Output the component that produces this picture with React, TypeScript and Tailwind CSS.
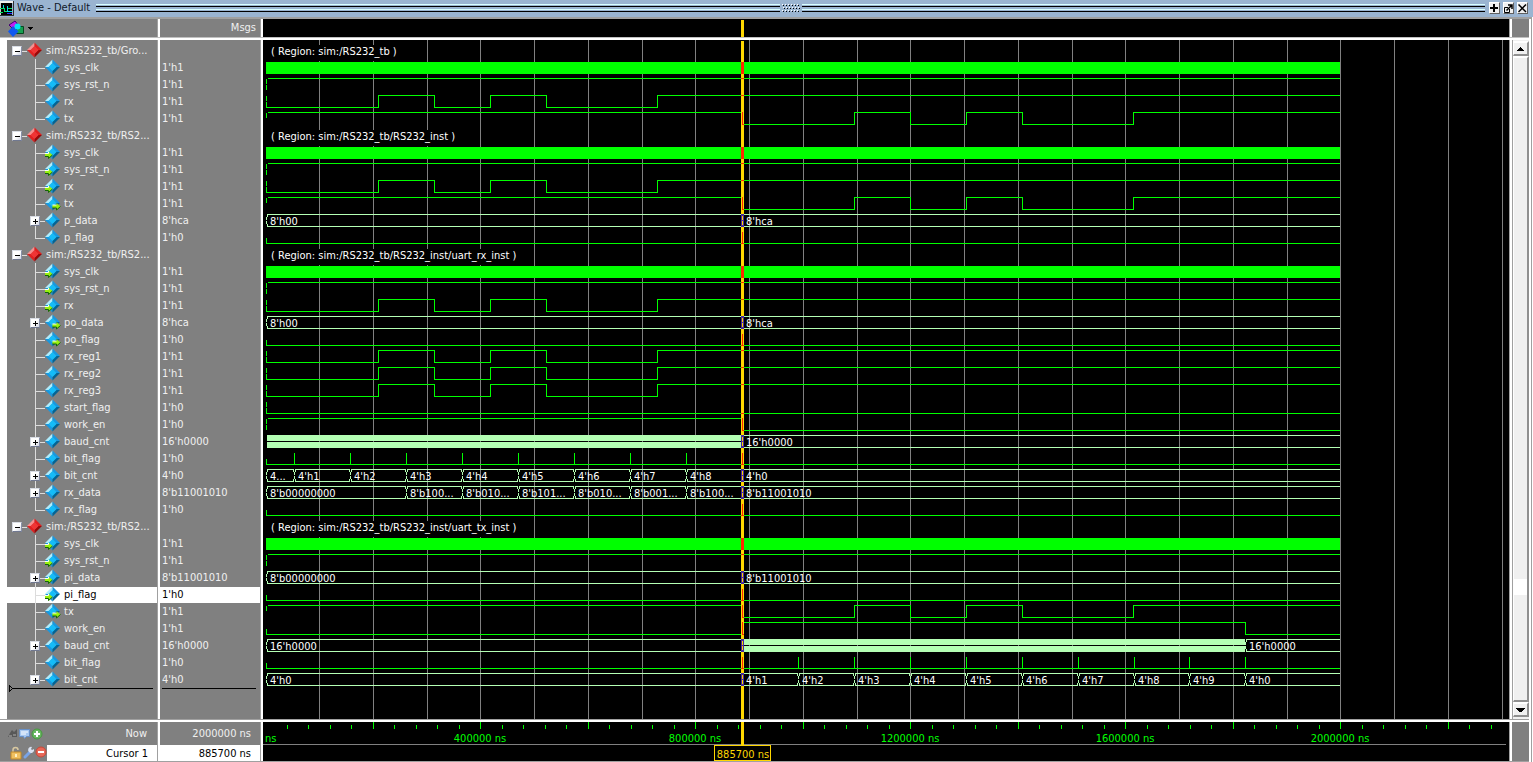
import { useState } from "react";

type Level = { kind: "level"; start: 0 | 1; edges: number[]; init: "both" | "upper" | "lower" };
type Pulse = { kind: "pulse"; at: number[] };
type Clock = { kind: "clock" };
type Bus = { kind: "bus"; segs: { from: number; label: string; dense?: boolean }[] };
type Region = { kind: "region"; label: string; width: number };
type Wave = Level | Pulse | Clock | Bus | Region;

interface Row {
    name: string;
    value: string;
    wave: Wave;
    port?: "in" | "out";
    expandable?: boolean;
}

// Time base: everything below is in microseconds
const END = 2000;
const CURSOR = 886;
const BIT = 104.17;
const ORIGIN = 2.5;
const SCALE = 0.5374;
const ROW_H = 17;
const xAt = (t: number) => Math.round(ORIGIN + t * SCALE);

const rxEdges = [209, 313, 417, 522, 729];
const txEdges = [CURSOR, 1095, 1199, 1303, 1407, 1615];
const rxBits = Array.from({ length: 8 }, (_, i) => 53.5 + i * BIT);
const txBits = Array.from({ length: 9 }, (_, i) => CURSOR + (i + 1) * BIT);

const level = (start: 0 | 1, edges: number[], init: Level["init"]): Level => ({ kind: "level", start, edges, init });
const region = (path: string, width: number): Region => ({ kind: "region", label: `( Region: ${path} )`, width });
const clock: Clock = { kind: "clock" };
const reset = level(1, [], "both");
const rx = level(0, rxEdges, "both");
const tx = level(1, txEdges, "upper");

const rows: Row[] = [
    { name: "sim:/RS232_tb/Gro...", value: "", wave: region("sim:/RS232_tb", 130) },
    { name: "sys_clk", value: "1'h1", wave: clock },
    { name: "sys_rst_n", value: "1'h1", wave: reset },
    { name: "rx", value: "1'h1", wave: rx },
    { name: "tx", value: "1'h1", wave: tx },
    { name: "sim:/RS232_tb/RS2...", value: "", wave: region("sim:/RS232_tb/RS232_inst", 190) },
    { name: "sys_clk", value: "1'h1", wave: clock, port: "in" },
    { name: "sys_rst_n", value: "1'h1", wave: reset, port: "in" },
    { name: "rx", value: "1'h1", wave: rx, port: "in" },
    { name: "tx", value: "1'h1", wave: tx, port: "out" },
    { name: "p_data", value: "8'hca", wave: { kind: "bus", segs: [{ from: 0, label: "8'h00" }, { from: CURSOR, label: "8'hca" }] }, expandable: true },
    { name: "p_flag", value: "1'h0", wave: { kind: "pulse", at: [CURSOR] } },
    { name: "sim:/RS232_tb/RS2...", value: "", wave: region("sim:/RS232_tb/RS232_inst/uart_rx_inst", 252) },
    { name: "sys_clk", value: "1'h1", wave: clock, port: "in" },
    { name: "sys_rst_n", value: "1'h1", wave: reset, port: "in" },
    { name: "rx", value: "1'h1", wave: rx, port: "in" },
    { name: "po_data", value: "8'hca", wave: { kind: "bus", segs: [{ from: 0, label: "8'h00" }, { from: CURSOR, label: "8'hca" }] }, port: "out", expandable: true },
    { name: "po_flag", value: "1'h0", wave: { kind: "pulse", at: [CURSOR] }, port: "out" },
    { name: "rx_reg1", value: "1'h1", wave: rx },
    { name: "rx_reg2", value: "1'h1", wave: rx },
    { name: "rx_reg3", value: "1'h1", wave: rx },
    { name: "start_flag", value: "1'h0", wave: level(0, [], "both") },
    { name: "work_en", value: "1'h0", wave: level(1, [CURSOR], "both") },
    { name: "baud_cnt", value: "16'h0000", wave: { kind: "bus", segs: [{ from: 0, label: "", dense: true }, { from: CURSOR, label: "16'h0000" }] }, expandable: true },
    { name: "bit_flag", value: "1'h0", wave: { kind: "pulse", at: [...rxBits, CURSOR] } },
    {
        name: "bit_cnt",
        value: "4'h0",
        wave: { kind: "bus", segs: [{ from: 0, label: "4..." }, ...rxBits.map((t, i) => ({ from: t, label: `4'h${i + 1}` })), { from: CURSOR, label: "4'h0" }] },
        expandable: true,
    },
    {
        name: "rx_data",
        value: "8'b11001010",
        wave: {
            kind: "bus",
            segs: [
                { from: 0, label: "8'b00000000" },
                ...["8'b100...", "8'b010...", "8'b101...", "8'b010...", "8'b001...", "8'b100..."].map((label, i) => ({ from: rxBits[i + 2], label })),
                { from: CURSOR, label: "8'b11001010" },
            ],
        },
        expandable: true,
    },
    { name: "rx_flag", value: "1'h0", wave: { kind: "pulse", at: [CURSOR] } },
    { name: "sim:/RS232_tb/RS2...", value: "", wave: region("sim:/RS232_tb/RS232_inst/uart_tx_inst", 252) },
    { name: "sys_clk", value: "1'h1", wave: clock, port: "in" },
    { name: "sys_rst_n", value: "1'h1", wave: reset, port: "in" },
    { name: "pi_data", value: "8'b11001010", wave: { kind: "bus", segs: [{ from: 0, label: "8'b00000000" }, { from: CURSOR, label: "8'b11001010" }] }, port: "in", expandable: true },
    { name: "pi_flag", value: "1'h0", wave: { kind: "pulse", at: [CURSOR] }, port: "in" },
    { name: "tx", value: "1'h1", wave: tx, port: "out" },
    { name: "work_en", value: "1'h1", wave: level(0, [CURSOR, txBits[8]], "lower") },
    {
        name: "baud_cnt",
        value: "16'h0000",
        wave: { kind: "bus", segs: [{ from: 0, label: "16'h0000" }, { from: CURSOR, label: "", dense: true }, { from: txBits[8], label: "16'h0000" }] },
        expandable: true,
    },
    { name: "bit_flag", value: "1'h0", wave: { kind: "pulse", at: [CURSOR, ...txBits] } },
    {
        name: "bit_cnt",
        value: "4'h0",
        wave: {
            kind: "bus",
            segs: [{ from: 0, label: "4'h0" }, { from: CURSOR, label: "4'h1" }, ...txBits.map((t, i) => ({ from: t, label: i < 8 ? `4'h${i + 2}` : "4'h0" }))],
        },
        expandable: true,
    },
];

function Diamond({ red, port }: { red?: boolean; port?: "in" | "out" }) {
    const c = red ? ["#f49090", "#e02020", "#980808", "#f03434"] : ["#b0ecfc", "#1898e0", "#046494", "#14bcf8"];
    return (
        <svg width="16" height="17" className="block shrink-0">
            <path d="M7.5 0.5 L0 8 H4 L7.5 4.5Z" fill={c[0]} />
            <path d="M7.5 0.5 L15 8 H11 L7.5 4.5Z" fill={c[1]} />
            <path d="M0 8 L7.5 15.5 V11.5 L4 8Z" fill={c[1]} />
            <path d="M15 8 L7.5 15.5 V11.5 L11 8Z" fill={c[2]} />
            <path d="M7.5 4 L11.5 8 L7.5 12 L3.5 8Z" fill={c[3]} />
            {port === "in" && (
                <g>
                    <path d="M0 9.5 H3.5 V7.5 L7.5 11 L3.5 15 V13 H0Z" fill="#98f010" />
                    <path d="M0 12.5 H3.5 V14.5 L7.5 11" stroke="#146408" fill="none" />
                    <path d="M0 9.5 H3.5 V8" stroke="#fffff0" fill="none" />
                </g>
            )}
            {port === "out" && (
                <g>
                    <path d="M7.5 10 H11.5 V8 L15.5 11.5 L11.5 15 V13 H7.5Z" fill="#98f010" />
                    <path d="M7.5 13 H11.5 V15 L15.5 11.5" stroke="#146408" fill="none" />
                    <path d="M7.5 10 H11.5" stroke="#fffff0" fill="none" />
                </g>
            )}
        </svg>
    );
}

function Expander({ open, label }: { open?: boolean; label: string }) {
    return (
        <button
            aria-label={label}
            className="block size-[10px] shrink-0 border border-t-[#d8dce4] border-r-[#8890a8] border-b-[#707890] border-l-[#d8dce4] bg-linear-to-br from-white from-50% to-[#d0d4e0]"
        >
            <svg width="8" height="8" className="block" shapeRendering="crispEdges">
                <path d={open ? "M2 4h5v1h-5z" : "M2 4h5v1h-5z M4 2h1v2h-1z M4 5h1v2h-1z"} fill="#000" />
            </svg>
        </button>
    );
}

function TreeRow({ row, last, selected, onSelect }: { row: Row; last: boolean; selected: boolean; onSelect: () => void }) {
    const tone = selected ? "bg-white text-black shadow-[inset_0_1px_#808080]" : "text-[#f0f0f0]";
    if (row.wave.kind === "region") {
        return (
            <div className="flex h-[17px] items-center pl-[5px] text-[#f0f0f0]">
                <Expander open label={`Collapse ${row.name}`} />
                <svg width="5" height="17" className="block shrink-0" shapeRendering="crispEdges">
                    <path d="M0 9h5v1h-5z" fill="#dcdcdc" />
                </svg>
                <div className="w-[19px] shrink-0">
                    <Diamond red />
                </div>
                <span className="whitespace-nowrap">{row.name}</span>
            </div>
        );
    }
    return (
        <div onClick={onSelect} className={`flex h-[17px] items-center pl-[23px] ${tone}`}>
            <div className="relative flex w-[15px] shrink-0 items-center">
                <svg width="15" height="17" className="block" shapeRendering="crispEdges">
                    <path d={last ? "M5 0h1v9h-1z M5 9h10v1h-10z" : "M5 0h1v17h-1z M5 9h10v1h-10z"} fill="#dcdcdc" />
                </svg>
                {row.expandable && (
                    <div className="absolute top-1 left-0">
                        <Expander label={`Expand ${row.name}`} />
                    </div>
                )}
            </div>
            <div className="w-[19px] shrink-0">
                <Diamond port={row.port} />
            </div>
            <span className="whitespace-nowrap">{row.name}</span>
        </div>
    );
}

function LevelTrace({ w }: { w: Level }) {
    let lv = w.start;
    let d = `M${xAt(0) + 1}.5 ${lv ? 2.5 : 14.5}`;
    w.edges.forEach((t) => {
        lv = lv ? 0 : 1;
        d += ` H${xAt(t)}.5 V${lv ? 2.5 : 14.5}`;
    });
    d += ` H${xAt(END)}`;
    const x = xAt(0);
    return (
        <g stroke="#00ff00" fill="none">
            <path d={d} />
            {w.init !== "lower" && <path d={`M${x}.5 3V8`} />}
            {w.init !== "upper" && <path d={`M${x}.5 9V14`} />}
            {w.start === 0 && <path d={`M${x} 14.5h2`} />}
        </g>
    );
}

function BusTrace({ w }: { w: Bus }) {
    return (
        <g>
            {w.segs.map((s, i) => {
                const a = xAt(s.from);
                const b = xAt(w.segs[i + 1]?.from ?? END);
                const final = i === w.segs.length - 1;
                if (s.dense) {
                    return <path key={i} d={`M${a + 1} 2H${b}V8H${a + 1}Z M${a + 1} 9H${b}V15H${a + 1}Z`} fill="#b4ffb4" />;
                }
                return (
                    <g key={i}>
                        <path
                            d={`M${a + 1} 2.5H${final ? b : b - 1} M${a + 1} 14.5H${final ? b : b - 1} M${a + 1}.5 3V5 M${a}.5 5V8 M${a}.5 9V12 M${a + 1}.5 12V14`}
                            stroke="#b4ffb4"
                            fill="none"
                        />
                        {!final && <path d={`M${b - 1}.5 2V5 M${b - 1}.5 12V15`} stroke="#b4ffb4" />}
                        <text x={a + 4} y="13" fill="#fff">
                            {s.label}
                        </text>
                    </g>
                );
            })}
        </g>
    );
}

function Trace({ w }: { w: Wave }) {
    const x0 = xAt(0);
    const x1 = xAt(END);
    switch (w.kind) {
        case "clock":
            return <rect x={x0} y="3" width={x1 - x0} height="12" fill="#00ff00" />;
        case "level":
            return <LevelTrace w={w} />;
        case "pulse":
            return <path d={`M${x0} 14.5H${x1} M${x0}.5 9V14 ${w.at.map((t) => `M${xAt(t)}.5 3V14`).join(" ")}`} stroke="#00ff00" fill="none" />;
        case "bus":
            return <BusTrace w={w} />;
        case "region":
            return (
                <g>
                    <rect x="5" y="3" width={w.width} height="16" fill="#000" />
                    <text x="8" y="13" fill="#fff">
                        {w.label}
                    </text>
                </g>
            );
    }
}

// Inverted colours where a trace passes under the cursor
function CursorOverlap({ w, x }: { w: Wave; x: number }) {
    if (w.kind === "region") return null;
    if (w.kind === "clock") return <rect x={x - 1} y="3" width="3" height="12" fill="#ff2800" />;
    if (w.kind === "bus") return <path d={`M${x - 1} 2h3v13h-3z M${x} 4v4h1v-4z M${x} 9v4h1v-4z`} fill="#4828a0" fillRule="evenodd" />;
    if (w.kind === "pulse") return <path d={`M${x} 3h1v11h1v1h-3v-1h1z`} fill="#ff2800" />;
    if (w.edges.includes(CURSOR)) return <path d={`M${x} 2h1v12h1v1h-2z`} fill="#ff2800" />;
    const up = w.edges.filter((t) => t < CURSOR).length % 2 ? !w.start : w.start;
    return <rect x={x - 1} y={up ? 2 : 14} width="3" height="1" fill="#ff2800" />;
}

function WavePlot() {
    const cx = xAt(CURSOR);
    return (
        <svg className="block min-w-0 flex-1 text-[11px]" shapeRendering="crispEdges" role="img" aria-label="Waveforms">
            {Array.from({ length: 40 }, (_, i) => (
                <rect key={i} x={xAt((i + 1) * 100)} y="0" width="1" height="100%" fill="#808080" />
            ))}
            {rows.map((r, i) => (
                <g key={i} transform={`translate(0 ${2 + i * ROW_H})`}>
                    <Trace w={r.wave} />
                </g>
            ))}
            <rect x={cx - 1} y="1" width="3" height="100%" fill="#ffd700" />
            {rows.map((r, i) => (
                <g key={i} transform={`translate(0 ${2 + i * ROW_H})`}>
                    <CursorOverlap w={r.wave} x={cx} />
                </g>
            ))}
        </svg>
    );
}

function Ruler() {
    const cx = xAt(CURSOR);
    return (
        <svg className="block min-w-0 flex-1 text-[11px]" shapeRendering="crispEdges" role="img" aria-label="Timeline">
            {Array.from({ length: 57 }, (_, i) => {
                const major = (i + 1) % 5 === 0;
                return <rect key={i} x={xAt((i + 1) * 40)} y={major ? 0 : 3} width="1" height={major ? 7 : 4} fill="#00ff00" />;
            })}
            <text x="2" y="20" fill="#00ff00">
                ns
            </text>
            {[400, 800, 1200, 1600, 2000].map((t) => (
                <text key={t} x={xAt(t)} y="20" textAnchor="middle" fill="#00ff00">
                    {`${t}000 ns`}
                </text>
            ))}
            <path d="M0 22.5H1243" stroke="#808080" />
            <rect x={cx - 1} y="0" width="3" height="23" fill="#ffd700" />
            <rect x={cx - 27.5} y="23.5" width="56" height="15" fill="#000" stroke="#ffd700" />
            <text x={cx + 1} y="36" textAnchor="middle" fill="#ffd700">
                885700 ns
            </text>
        </svg>
    );
}

function Grooves() {
    return (
        <div className="flex flex-1 flex-col gap-[2px]">
            <div className="h-[3px] border-t border-b border-t-[#d8ffff] border-b-black" />
            <div className="h-[3px] border-t border-b border-t-[#d8ffff] border-b-black" />
        </div>
    );
}

function TitleBar() {
    const btn = "flex h-[12px] w-[11px] items-center justify-center border border-t-white border-l-white border-r-[#606060] border-b-[#606060] bg-[#f0f0f0]";
    return (
        <header className="flex h-[17px] items-center bg-[#9ab4d1] pr-[5px] pb-px">
            <svg width="14" height="15" className="mr-[3px] block" shapeRendering="crispEdges">
                <path d="M0 0h13v2h-13z" fill="#f0f0f0" />
                <path d="M0 2h12v12h-12z" fill="#000" />
                <path d="M0 2h1v12h-1z" fill="#d0d0d0" />
                <path d="M13 0h1v15h-14v-1h13z" fill="#303030" />
                <path d="M0 7.5h4v3h3v-3h5 M0 11.5h3" stroke="#00e060" fill="none" />
                <path d="M3.5 4v3 M7.5 5v6 M8 10.5h4" stroke="#00d8f0" fill="none" />
                <path d="M7 12.5h5" stroke="#3030ff" />
            </svg>
            <h1 className="mr-[6px] text-[11px] leading-[16px] whitespace-nowrap text-[#101828]">Wave - Default</h1>
            <Grooves />
            <svg width="22" height="9" className="block shrink-0" shapeRendering="crispEdges">
                {[0, 1, 2, 3, 4, 5].map((i) => (
                    <g key={i}>
                        <path d={`M${2 + i * 3} 0h1v1h-1z M${3 + i * 3} 3h1v1h-1z M${2 + i * 3} 6h1v1h-1z`} fill="#fff" />
                        <path d={`M${3 + i * 3} 1h1v1h-1z M${4 + i * 3} 4h1v1h-1z M${3 + i * 3} 7h1v1h-1z`} fill="#000" />
                    </g>
                ))}
            </svg>
            <Grooves />
            <div className="ml-[4px] flex gap-[3px]">
                <button className={btn} aria-label="Zoom pane">
                    <svg width="9" height="9" className="block shrink-0" shapeRendering="crispEdges">
                        <path d="M3 0h2v3h3v2h-3v3h-2v-3h-3v-2h3z" fill="#000" />
                    </svg>
                </button>
                <button className={btn} aria-label="Undock">
                    <svg width="9" height="9" className="block shrink-0">
                        <path d="M4 3.5H0.5V8.5H5.5V5" stroke="#000" fill="none" />
                        <path d="M2.5 6.5L7.5 1.5 M4 1H8V5" stroke="#000" strokeWidth="1.5" fill="none" />
                    </svg>
                </button>
                <button className={btn} aria-label="Close">
                    <svg width="9" height="9" className="block shrink-0">
                        <path d="M0.5 0.5L8 8M8 0.5L0.5 8" stroke="#000" strokeWidth="1.5" />
                    </svg>
                </button>
            </div>
        </header>
    );
}

function ScrollBar() {
    const btn = "flex h-[15px] w-full items-center justify-center border-t-2 border-l border-r-2 border-b-2 border-t-white border-l-white border-r-[#909090] border-b-[#909090] bg-[#f0f0f0]";
    return (
        <div className="flex w-[17px] flex-col border-l border-[#a0a0a0] bg-[#f0f0f0] pt-px pb-[2px]">
            <button className={btn} aria-label="Scroll up">
                <svg width="7" height="4" shapeRendering="crispEdges">
                    <path d="M3 0h1v1h1v1h1v1h1v1h-7v-1h1v-1h1v-1h1z" fill="#000" />
                </svg>
            </button>
            <div className="flex flex-1 flex-col border-t-2 border-r-2 border-b-2 border-l border-t-white border-r-[#909090] border-b-[#909090] border-l-white">
                <div className="flex-1" />
                <div className="h-[16px] bg-white" />
                <div className="h-[105px]" />
            </div>
            <button className={btn} aria-label="Scroll down">
                <svg width="9" height="4" shapeRendering="crispEdges">
                    <path d="M0 0h9v1h-1v1h-1v1h-1v1h-3v-1h-1v-1h-1v-1h-1z" fill="#000" />
                </svg>
            </button>
        </div>
    );
}

const edge = "shrink-0 border-r border-[#a0a0a0]";
const nameCol = `w-[158px] ${edge}`;
const msgCol = `w-[101px] ${edge}`;

export default function App() {
    const [selected, setSelected] = useState(32);

    return (
        <div className="flex min-h-screen flex-col overflow-hidden bg-white font-['DejaVu_Sans_Condensed','DejaVu_Sans',sans-serif] text-[11px] leading-[16px] [font-stretch:condensed]">
            <TitleBar />

            <div className="mr-px flex flex-1 flex-col border-t-2 border-r border-t-[#a0a0a0] border-r-[#a0a0a0] pr-[2px]">
                {/* Column headers */}
                <div className="flex h-[19px] shrink-0 gap-[2px] border-b border-[#c0c0c0]">
                    <div className={`${nameCol} bg-[#808080]`}>
                        <button className="flex h-[18px] items-center gap-[3px] pl-[8px]" aria-label="Column options">
                            <svg width="17" height="17" className="block">
                                <path d="M8.5 6.5h7v7h-7z" fill="#18a050" stroke="#084820" />
                                <path d="M1 5L7 1L11 6L5 9Z" fill="#c020f0" stroke="#400070" />
                                <path d="M5 6L10.5 11.5L5 17L0 11.5Z" fill="#1058f0" />
                                <circle cx="9.5" cy="6.5" r="3" fill="#00e8f8" />
                            </svg>
                            <svg width="5" height="3" className="block" shapeRendering="crispEdges">
                                <path d="M0 0h5v1h-1v1h-1v1h-1v-1h-1v-1h-1z" fill="#000" />
                            </svg>
                        </button>
                    </div>
                    <div className={`${msgCol} bg-[#808080] pr-[4px] text-right leading-[18px] text-[#f0f0f0]`}>Msgs</div>
                    <div className="flex min-w-0 flex-1 border-r border-[#a0a0a0] bg-black">
                        <svg className="block min-w-0 flex-1" height="18">
                            <rect x={xAt(CURSOR) - 1} y="1" width="3" height="17" fill="#ffd700" />
                        </svg>
                    </div>
                    <div className="w-[17px] bg-[#808080]" />
                </div>

                {/* Signals, values and waves */}
                <main className="flex flex-1 gap-[2px] border-b border-[#a0a0a0] pt-[2px]">
                    <div className={`${nameCol} pl-[7px]`}>
                        <div className="flex h-full flex-col bg-[#808080] pt-[2px]">
                            {rows.map((r, i) => (
                                <TreeRow
                                    key={i}
                                    row={r}
                                    last={i === rows.length - 1 || rows[i + 1].wave.kind === "region"}
                                    selected={i === selected}
                                    onSelect={() => setSelected(i)}
                                />
                            ))}
                            <svg width="150" height="7" className="-mt-[3px] ml-[2px] block" shapeRendering="crispEdges">
                                <path d="M0.5 0.5V6.5L3.5 3.5Z" stroke="#000" fill="none" />
                                <path d="M3 3h141v1h-141z" fill="#000" />
                            </svg>
                        </div>
                    </div>
                    <div className={`${msgCol} bg-[#808080] pt-[2px]`}>
                        {rows.map((r, i) => (
                            <div
                                key={i}
                                className={`h-[17px] pl-[2px] leading-[18px] ${i === selected ? "bg-white text-black shadow-[inset_0_1px_#808080]" : "text-[#f0f0f0]"}`}
                            >
                                {r.value}
                            </div>
                        ))}
                        <div className="mr-[4px] ml-[2px] h-px bg-black" />
                    </div>
                    <div className="flex min-w-0 flex-1 border-r border-[#a0a0a0] bg-black">
                        <WavePlot />
                    </div>
                    <ScrollBar />
                </main>

                {/* Cursor pane */}
                <footer className="flex h-[42px] shrink-0 gap-[2px] border-b border-[#a0a0a0] pt-[2px]">
                    <div className={`${nameCol} flex flex-col bg-[#808080]`}>
                        <div className="flex h-[23px] items-center justify-between pr-[10px] pl-[8px] text-[#f0f0f0]">
                            <svg width="36" height="12" className="block">
                                <path d="M0 9L2 5L4 2L6 4L9 1V9Z" fill="#585858" />
                                <path d="M1 8h3M5 7h3" stroke="#b0b0b0" />
                                <path d="M11.5 1.5h10v7h-3l-2 2-1-2h-4z" fill="#a8c8f0" stroke="#6890c8" />
                                <path d="M13 4h7M13 6h5" stroke="#fff" />
                                <circle cx="29" cy="6" r="5" fill="#68b860" stroke="#489840" />
                                <path d="M26 6h6M29 3v6" stroke="#fff" strokeWidth="2" />
                            </svg>
                            <span>Now</span>
                        </div>
                        <div className="flex h-[16px] items-center">
                            <svg width="47" height="14" className="block shrink-0">
                                <path d="M13 6V4a2.5 2.5 0 0 1 5 0" stroke="#d8c8a0" strokeWidth="1.5" fill="none" />
                                <path d="M11 6h10v7h-10z" fill="#f0c060" stroke="#c08828" />
                                <path d="M15 8h2v3h-2z" fill="#fff0c0" />
                                <path d="M25 11L30 6" stroke="#78a4e8" strokeWidth="3" strokeLinecap="round" />
                                <path d="M29 6a3 3 0 0 1 3-5l-1 2 1 1 2-1a3 3 0 0 1-5 3z" fill="#d8e0f0" />
                                <circle cx="41" cy="6" r="5" fill="#e86858" stroke="#c84838" />
                                <path d="M38 6h6" stroke="#fff" strokeWidth="2" />
                            </svg>
                            <div className="h-[16px] flex-1 bg-white pr-[9px] text-right leading-[18px] text-black">Cursor 1</div>
                        </div>
                    </div>
                    <div className={`${msgCol} bg-[#808080] text-right`}>
                        <div className="h-[23px] pr-[9px] leading-[24px] text-[#f0f0f0]">2000000 ns</div>
                        <div className="h-[16px] bg-white pr-[9px] leading-[18px] text-black">885700 ns</div>
                    </div>
                    <div className="flex min-w-0 flex-1 border-r border-[#a0a0a0] bg-black">
                        <Ruler />
                    </div>
                    <div className="w-[17px] bg-[#808080]" />
                </footer>
            </div>
        </div>
    );
}
